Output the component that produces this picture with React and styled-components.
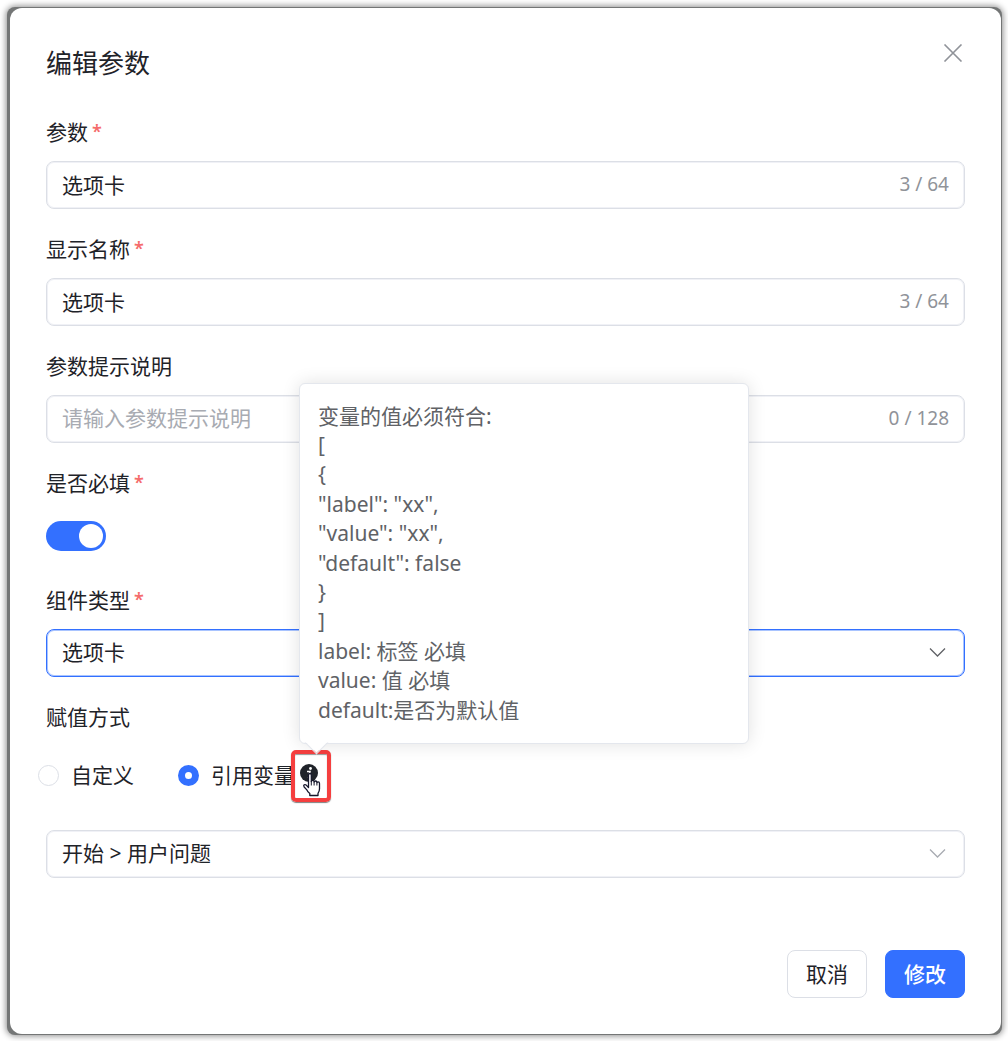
import React, { useState }           from 'react';
import styled, { createGlobalStyle } from 'styled-components';


const GlobalStyle=createGlobalStyle`
	*{
		box-sizing: border-box;
	}
	body{
		margin: 0;
		background: #FFFFFF;
		color: #1F2329;
		font-family: "Noto Sans", "Noto Sans CJK SC", sans-serif;
		font-size: 21px;
	}
	input, select, button{
		font: inherit;
		color: inherit;
	}
`;

const Backdrop=styled.div`
	margin: 7px 6px 6px 7px;
	padding: 1px 1px 1px 3px;
	background: #747676;
	border-radius: 8px;
	box-shadow: 0 0 6px 1px rgba(0, 0, 0, 0.45);
`;

const Dialog=styled.form`
	display: flex;
	flex-direction: column;
	padding: 36px;
	background: #FFFFFF;
	border-radius: 12px;
`;

const Header=styled.header`
	display: flex;
	align-items: flex-start;
	justify-content: space-between;
	margin-bottom: 34px;
`;

const Title=styled.h1`
	margin: 0;
	font-size: 26px;
	line-height: 38px;
	font-weight: 400;
`;

const CloseButton=styled.button`
	display: flex;
	padding: 0;
	border: 0;
	background: none;
	color: #909399;
	cursor: pointer;
`;

const Fields=styled.div`
	display: flex;
	flex-direction: column;
	gap: 24px;
`;

const Field=styled.div`
	display: flex;
	flex-direction: column;
	gap: 12px;
`;

const Label=styled.label`
	display: flex;
	gap: 4px;
	line-height: 33px;
`;

const Star=styled.span`
	color: #F56C6C;
	font-size: 18px;
	font-weight: 600;
	line-height: 30px;
`;

const Control=styled.div`
	display: flex;
	align-items: center;
	height: 48px;
	padding: 0 15px 2px;
	border: 1px solid ${p=>p.$active ? '#3370FF' : '#DCDFE6'};
	border-radius: 8px;
	box-shadow: inset 0 0 0 1px ${p=>p.$active ? '#A9C4FF' : '#F0F1F6'};
`;

const TextInput=styled.input`
	flex: 1;
	min-width: 0;
	padding: 0;
	border: 0;
	outline: 0;
	background: none;
	&::placeholder{
		color: #A8ABB2;
		opacity: 1;
	}
`;

const Counter=styled.span`
	color: #909399;
	font-size: 19px;
`;

const NativeSelect=styled.select`
	flex: 1;
	min-width: 0;
	padding: 0;
	border: 0;
	outline: 0;
	background: none;
	appearance: none;
`;

const SwitchRow=styled.div`
	display: flex;
	align-items: center;
	height: 48px;
`;

const Switch=styled.input`
	appearance: none;
	display: flex;
	align-items: center;
	width: 60px;
	height: 30px;
	margin: 0;
	padding: 0 3px;
	border-radius: 15px;
	background: #DCDFE6;
	cursor: pointer;
	&::before{
		content: "";
		width: 24px;
		height: 24px;
		border-radius: 50%;
		background: #FFFFFF;
	}
	&:checked{
		justify-content: flex-end;
		background: #3370FF;
	}
`;

const RadioRow=styled.div`
	display: flex;
	align-items: center;
	gap: 44px;
	height: 60px;
	margin-left: -8px;
	padding-bottom: 2px;
`;

const RadioLabel=styled.label`
	display: flex;
	align-items: center;
	gap: 12px;
	line-height: 30px;
`;

const Radio=styled.input`
	appearance: none;
	width: 21px;
	height: 21px;
	margin: 0;
	border: 1px solid #DCDFE6;
	border-radius: 50%;
	background: #FFFFFF;
	&:checked{
		border: 7px solid #3370FF;
	}
`;

const RadioWithHint=styled.div`
	display: flex;
	align-items: center;
	gap: 5px;
`;

const Hint=styled.div`
	position: relative;
	height: 22px;
`;

const HintButton=styled.button`
	display: flex;
	padding: 0;
	border: 0;
	background: none;
	color: #1F2329;
	cursor: pointer;
`;

const Highlight=styled.div`
	position: absolute;
	top: -14px;
	left: -9px;
	width: 40px;
	height: 52px;
	border: 4px solid #F53F3F;
	border-radius: 5px;
	box-shadow: 0 1px 1px rgba(0, 0, 0, 0.5), inset 0 1px 1px rgba(0, 0, 0, 0.4);
	pointer-events: none;
`;

const Pointer=styled.svg`
	position: absolute;
	top: 8px;
	left: 2px;
	pointer-events: none;
`;

const Tooltip=styled.div`
	position: absolute;
	bottom: calc(100% + 20px);
	left: -1px;
	z-index: 1;
	width: 450px;
	padding: 18px;
	border: 1px solid #E4E7ED;
	border-radius: 6px;
	background: #FFFFFF;
	box-shadow: 0 0 18px rgba(0, 0, 0, 0.12);
	color: #606266;
	line-height: 1.4;
	white-space: pre-line;
	&::after{
		content: "";
		position: absolute;
		bottom: -8px;
		left: 8px;
		width: 15px;
		height: 15px;
		border: 1px solid #E4E7ED;
		border-top-color: transparent;
		border-left-color: transparent;
		background: linear-gradient(135deg, transparent 50%, #FFFFFF 50%);
		transform: rotate(45deg);
	}
`;

const Footer=styled.footer`
	display: flex;
	justify-content: flex-end;
	gap: 18px;
	margin-top: 72px;
`;

const Button=styled.button`
	width: 80px;
	height: 48px;
	padding: 0 0 3px;
	border: 1px solid ${p=>p.$primary ? '#3370FF' : '#DCDFE6'};
	border-radius: 8px;
	background: ${p=>p.$primary ? '#3370FF' : '#FFFFFF'};
	color: ${p=>p.$primary ? '#FFFFFF' : '#1F2329'};
	font-weight: ${p=>p.$primary ? 500 : 400};
	cursor: pointer;
`;

const HINT_TEXT=`变量的值必须符合:
[
{
"label": "xx",
"value": "xx",
"default": false
}
]
label: 标签 必填
value: 值 必填
default:是否为默认值`;

const FieldLabel=({ id, required, children })=>(
	<Label htmlFor={id}>
		{children}
		{required && <Star>*</Star>}
	</Label>
);

const TextField=({ id, label, required, initial=``, max, placeholder })=>{
	const [value, setValue]=useState(initial);
	return (
		<Field>
			<FieldLabel id={id} required={required}>{label}</FieldLabel>
			<Control>
				<TextInput
					id={id}
					value={value}
					maxLength={max}
					placeholder={placeholder}
					onChange={e=>setValue(e.target.value)}
				/>
				<Counter>{`${value.length} / ${max}`}</Counter>
			</Control>
		</Field>
	);
};

const Select=({ active, option, ...rest })=>(
	<Control $active={active}>
		<NativeSelect {...rest}>
			<option>{option}</option>
		</NativeSelect>
		<svg width="22" height="20" viewBox="0 0 22 20" fill="none">
			<path
				d="M3 6.5l7.5 7.5L18 6.5"
				stroke={active ? `#606266` : `#A8ABB2`}
				strokeWidth="1.3"
			/>
		</svg>
	</Control>
);

const App=()=>{
	const [required, setRequired]=useState(true);
	const [mode, setMode]=useState(`variable`);
	return (
		<>
			<GlobalStyle/>
			<Backdrop>
				<Dialog onSubmit={e=>e.preventDefault()}>
					<Header>
						<Title>编辑参数</Title>
						<CloseButton type="button" aria-label="关闭">
							<svg width="24" height="18" viewBox="0 0 24 18" fill="none">
								<path d="M3.5 .5l17 17m0-17l-17 17" stroke="currentColor" strokeWidth="1.6"/>
							</svg>
						</CloseButton>
					</Header>
					<Fields>
						<TextField id="name" label="参数" required initial="选项卡" max={64}/>
						<TextField id="title" label="显示名称" required initial="选项卡" max={64}/>
						<TextField id="tip" label="参数提示说明" max={128} placeholder="请输入参数提示说明"/>
						<Field>
							<FieldLabel id="required" required>是否必填</FieldLabel>
							<SwitchRow>
								<Switch
									id="required"
									type="checkbox"
									role="switch"
									checked={required}
									onChange={e=>setRequired(e.target.checked)}
								/>
							</SwitchRow>
						</Field>
						<Field>
							<FieldLabel id="type" required>组件类型</FieldLabel>
							<Select id="type" active option="选项卡"/>
						</Field>
						<Field>
							<Label as="div" id="mode">赋值方式</Label>
							<RadioRow role="radiogroup" aria-labelledby="mode">
								<RadioLabel>
									<Radio
										type="radio"
										name="mode"
										checked={mode===`custom`}
										onChange={()=>setMode(`custom`)}
									/>
									自定义
								</RadioLabel>
								<RadioWithHint>
									<RadioLabel>
										<Radio
											type="radio"
											name="mode"
											checked={mode===`variable`}
											onChange={()=>setMode(`variable`)}
										/>
										引用变量
									</RadioLabel>
									<Hint>
										<HintButton type="button" aria-label="说明" aria-describedby="hint">
											<svg width="18" height="18" viewBox="0 0 18 18">
												<circle cx="9" cy="9" r="9" fill="currentColor"/>
												<circle cx="10.5" cy="4.5" r="1.4" fill="#FFFFFF"/>
												<path d="M7 7.5h3l-1.3 5.5h1.8" fill="none" stroke="#FFFFFF" strokeWidth="1.5"/>
											</svg>
										</HintButton>
										<Tooltip id="hint" role="tooltip">{HINT_TEXT}</Tooltip>
										<Highlight/>
										<Pointer width="19" height="26" viewBox="0 0 19 26">
											<path
												d="M6.5 15.5V3.2q0-1.7 1.4-1.7t1.4 1.7v6.3q.3-1.2 1.4-1.2 1.4 0 1.4 1.7.4-1 1.5-1 1.3 0 1.3 1.7.4-.8 1.3-.8 1.3 0 1.3 1.7v5.2q0 2.6-1.5 4.6v2.1H7.8v-1.9Q5.5 19.8 4.6 17.6L2.2 15q-1-1.4 0-2.2 1-.6 2 .3z"
												fill="#FFFFFF"
												stroke="#15172B"
												strokeWidth="1.3"
												strokeLinejoin="round"
											/>
											<path d="M9.3 9v4.5M12.1 10v3.5M14.9 11v2.5" stroke="#15172B" strokeWidth="1"/>
										</Pointer>
									</Hint>
								</RadioWithHint>
							</RadioRow>
						</Field>
						<Select aria-label="引用变量" option="开始 > 用户问题"/>
					</Fields>
					<Footer>
						<Button type="button">取消</Button>
						<Button type="submit" $primary>修改</Button>
					</Footer>
				</Dialog>
			</Backdrop>
		</>
	);
};

export default App;
